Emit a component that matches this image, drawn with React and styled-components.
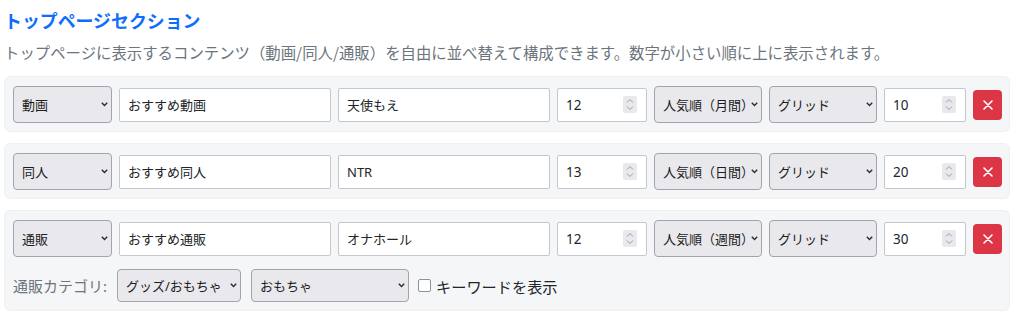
import React from 'react';
import styled, { createGlobalStyle } from 'styled-components';

const GlobalStyle = createGlobalStyle`
  body {
    margin: 0;
    background: #fff;
    font-family: "Noto Sans", "Noto Sans CJK JP", sans-serif;
    color: #212529;
  }
`;

const Page = styled.div`
  width: 1006px;
  padding: 10px 0 0 4px;
`;

const Title = styled.h2`
  margin: 0;
  font-size: 17.9px;
  line-height: 21px;
  font-weight: 700;
  color: #0d6efd;
  font-family: "Noto Sans CJK JP", sans-serif;
`;

const Lead = styled.p`
  margin: 10px 0 13px;
  font-size: 15.4px;
  line-height: 22px;
  color: #6c757d;
  font-family: "Noto Sans CJK JP", sans-serif;
`;

const Card = styled.div`
  background: #f5f6f8;
  border: 1px solid #eef0f3;
  border-radius: 6px;
  padding: 9px 7px 8px 8px;
  margin-bottom: 11px;
`;

const Row = styled.div`
  display: flex;
  align-items: center;
  gap: 7px;
`;

const SubRow = styled.div`
  display: flex;
  align-items: center;
  margin-top: 12px;
`;

const SelectWrap = styled.div`
  position: relative;
  flex: none;
  width: ${p => p.$w}px;
  margin-right: ${p => p.$mr || 0}px;
`;

const NativeSelect = styled.select`
  appearance: none;
  width: 100%;
  height: ${p => p.$h || 37}px;
  background: #e9e9ed;
  border: 1px solid #a3a3ad;
  border-radius: 4px;
  padding: 0 4px 0 8px;
  font-family: "Noto Sans", "Noto Sans CJK JP", sans-serif;
  font-size: 13px;
  color: #1c1c1c;
  outline: none;
`;

const Chevron = styled.svg`
  position: absolute;
  right: 4px;
  top: 50%;
  margin-top: -3px;
  pointer-events: none;
`;

const TextInput = styled.input`
  flex: none;
  box-sizing: border-box;
  width: ${p => p.$w}px;
  height: 34px;
  border: 1px solid #c4c8cc;
  border-radius: 2px;
  background: #fff;
  padding: 0 8px;
  font-family: "Noto Sans", "Noto Sans CJK JP", sans-serif;
  font-size: 13px;
  color: #212529;
  outline: none;
`;

const NumberBox = styled.div`
  flex: none;
  box-sizing: border-box;
  width: ${p => p.$w}px;
  height: 34px;
  display: flex;
  align-items: center;
  border: 1px solid #c4c8cc;
  border-radius: 2px;
  background: #fff;
  padding: 0 9px 0 8px;
`;

const NumberInput = styled.input`
  flex: 1;
  min-width: 0;
  border: none;
  background: transparent;
  padding: 0;
  font-family: "Noto Sans", "Noto Sans CJK JP", sans-serif;
  font-size: 13.5px;
  color: #212529;
  outline: none;
  -moz-appearance: textfield;
  &::-webkit-inner-spin-button,
  &::-webkit-outer-spin-button {
    -webkit-appearance: none;
    margin: 0;
  }
`;

const Spinner = styled.span`
  flex: none;
  width: 14px;
  height: 17px;
  background: #e9e9ed;
  border-radius: 2px;
  display: flex;
  align-items: center;
  justify-content: center;
`;

const DeleteButton = styled.button`
  flex: none;
  width: 29px;
  height: 30px;
  border: none;
  border-radius: 4px;
  background: #dc3545;
  display: flex;
  align-items: center;
  justify-content: center;
  padding: 0;
`;

const Label = styled.span`
  font-size: 15px;
  color: #6c757d;
  margin-right: 10px;
  font-family: "Noto Sans", "Noto Sans CJK JP", sans-serif;
`;

const CheckLabel = styled.label`
  display: flex;
  align-items: center;
  gap: 5px;
  font-size: 15.2px;
  color: #212529;
  font-family: "Noto Sans CJK JP", sans-serif;
`;

const Check = styled.input`
  appearance: none;
  margin: 0;
  width: 13px;
  height: 13px;
  border: 1px solid #8f8f9d;
  border-radius: 2px;
  background: #fff;
`;

const AddButton = styled.button`
  display: block;
  width: 152px;
  height: 38px;
  margin: 8px 0 0 1px;
  border: 1px solid #5bc0de;
  border-radius: 4px;
  background: #fff;
`;

const Select = ({ w, h, mr, value, options }) => (
  <SelectWrap $w={w} $mr={mr}>
    <NativeSelect $h={h} defaultValue={value}>
      {options.map(o => <option key={o}>{o}</option>)}
    </NativeSelect>
    <Chevron width="7" height="5" viewBox="0 0 7 5">
      <path d="M0.8 0.8 L3.5 3.6 L6.2 0.8" fill="none" stroke="#2b2b2b" strokeWidth="1.4" />
    </Chevron>
  </SelectWrap>
);

const NumberField = ({ w, value }) => (
  <NumberBox $w={w}>
    <NumberInput type="number" defaultValue={value} />
    <Spinner>
      <svg width="8" height="13" viewBox="0 0 8 13">
        <path d="M1 4.5 L4 1.5 L7 4.5" fill="none" stroke="#9a9aa2" strokeWidth="1" />
        <path d="M1 8.5 L4 11.5 L7 8.5" fill="none" stroke="#9a9aa2" strokeWidth="1" />
      </svg>
    </Spinner>
  </NumberBox>
);

const sections = [
  { type: '動画', title: 'おすすめ動画', keyword: '天使もえ', count: 12, sort: '人気順（月間）', layout: 'グリッド', order: 10 },
  { type: '同人', title: 'おすすめ同人', keyword: 'NTR', count: 13, sort: '人気順（日間）', layout: 'グリッド', order: 20 },
  { type: '通販', title: 'おすすめ通販', keyword: 'オナホール', count: 12, sort: '人気順（週間）', layout: 'グリッド', order: 30, shop: true },
];

const SectionCard = ({ s }) => (
  <Card>
    <Row>
      <Select w={99} value={s.type} options={['動画', '同人', '通販']} />
      <TextInput $w={212} defaultValue={s.title} />
      <TextInput $w={212} defaultValue={s.keyword} />
      <NumberField w={90} value={s.count} />
      <Select w={108} value={s.sort} options={['人気順（日間）', '人気順（週間）', '人気順（月間）']} />
      <Select w={108} value={s.layout} options={['グリッド', 'リスト']} />
      <NumberField w={82} value={s.order} />
      <DeleteButton aria-label="削除">
        <svg width="10" height="10" viewBox="0 0 10 10">
          <path d="M1 1 L9 9 M9 1 L1 9" stroke="#fff" strokeWidth="1.6" strokeLinecap="round" />
        </svg>
      </DeleteButton>
    </Row>
    {s.shop && (
      <SubRow>
        <Label>通販カテゴリ:</Label>
        <Select w={124} h={33} mr={10} value="グッズ/おもちゃ" options={['グッズ/おもちゃ']} />
        <Select w={158} h={33} mr={9} value="おもちゃ" options={['おもちゃ']} />
        <CheckLabel>
          <Check type="checkbox" />
          キーワードを表示
        </CheckLabel>
      </SubRow>
    )}
  </Card>
);

export default function App() {
  return (
    <Page>
      <GlobalStyle />
      <Title>トップページセクション</Title>
      <Lead>トップページに表示するコンテンツ（動画/同人/通販）を自由に並べ替えて構成できます。数字が小さい順に上に表示されます。</Lead>
      {sections.map(s => <SectionCard key={s.order} s={s} />)}
      <AddButton aria-label="セクションを追加" />
    </Page>
  );
}
